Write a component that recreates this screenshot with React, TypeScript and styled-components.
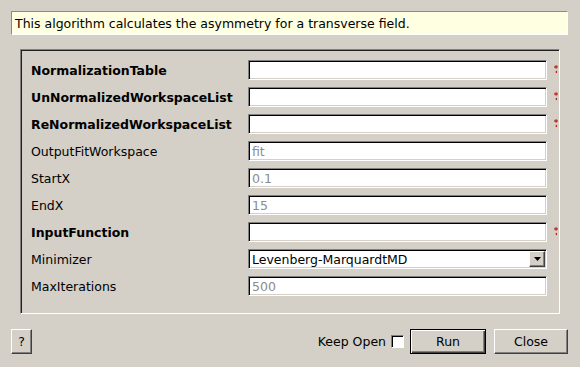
import { Fragment } from 'react';
import styled, { createGlobalStyle } from 'styled-components';

const GlobalStyle = createGlobalStyle`
  html, body {
    margin: 0;
    padding: 0;
    background: #d4d0c8;
  }
  body {
    font-family: "DejaVu Sans", "Liberation Sans", sans-serif;
    font-size: 12px;
    color: #000;
  }
`;

const Dialog = styled.div`
  width: 580px;
  height: 367px;
  box-sizing: border-box;
  padding: 11px 12px 0 11px;
  display: flex;
  flex-direction: column;
`;

const Description = styled.div`
  height: 24px;
  box-sizing: border-box;
  background: #ffffe1;
  border: 1px solid;
  border-color: #8a8a8a #ffffff #ffffff #8a8a8a;
  padding: 0 3px;
  display: flex;
  align-items: center;
  font-size: 12.5px;
`;

const Frame = styled.div`
  margin: 14px 8px 0 9px;
  height: 265px;
  box-sizing: border-box;
  border: 1px solid;
  border-color: #808080 #ffffff #ffffff #808080;
  box-shadow: inset 1px 1px 0 #202020;
  padding: 10px 0 0 10px;
  overflow: hidden;
`;

const Grid = styled.div`
  display: grid;
  grid-template-columns: 217px 299px 14px;
  grid-auto-rows: 20px;
  row-gap: 7px;
  align-items: center;
`;

const Label = styled.div<{ $bold?: boolean }>`
  font-weight: ${({ $bold }) => ($bold ? 'bold' : 'normal')};
  font-size: 12.5px;
  white-space: nowrap;
`;

const Field = styled.div`
  height: 20px;
  box-sizing: border-box;
  background: #fff;
  border: 1px solid;
  border-color: #808080 #ffffff #ffffff #808080;
  box-shadow: inset 1px 1px 0 #000, inset -1px -1px 0 #d4d0c8;
  padding: 0 3px;
  display: flex;
  align-items: center;
  color: #8c8c8c;
  font-size: 12.5px;
`;

const Combo = styled(Field)`
  color: #000;
  padding-right: 1px;
  justify-content: space-between;
`;

const ComboArrow = styled.div`
  width: 16px;
  height: 16px;
  box-sizing: border-box;
  background: #d4d0c8;
  border: 1px solid;
  border-color: #ffffff #404040 #404040 #ffffff;
  box-shadow: inset -1px -1px 0 #808080;
  display: flex;
  align-items: center;
  justify-content: center;
`;

const Star = styled.div`
  display: flex;
  align-items: center;
  padding-left: 7px;
  height: 20px;
`;

const Footer = styled.div`
  margin-top: 15px;
  display: flex;
  align-items: center;
`;

const Button = styled.button<{ $default?: boolean; $w: number }>`
  width: ${({ $w }) => $w}px;
  height: 25px;
  box-sizing: border-box;
  background: #d4d0c8;
  font-family: inherit;
  font-size: 12.5px;
  color: #000;
  padding: 0;
  border: 1px solid;
  border-color: ${({ $default }) =>
    $default ? '#000' : '#ffffff #404040 #404040 #ffffff'};
  box-shadow: ${({ $default }) =>
    $default
      ? 'inset 1px 1px 0 #fff, inset -1px -1px 0 #404040, inset -2px -2px 0 #808080'
      : 'inset -1px -1px 0 #808080'};
`;

const Spacer = styled.div`
  flex: 1;
`;

const KeepOpen = styled.label`
  display: flex;
  align-items: center;
  gap: 5px;
  margin-right: 6px;
  font-size: 12.5px;
`;

const Check = styled.span`
  width: 13px;
  height: 13px;
  box-sizing: border-box;
  background: #fff;
  border: 1px solid;
  border-color: #808080 #ffffff #ffffff #808080;
  box-shadow: inset 1px 1px 0 #000;
`;

const RightButtons = styled.div`
  display: flex;
  gap: 8px;
`;

type Prop = {
  name: string;
  bold?: boolean;
  value?: string;
  combo?: boolean;
};

const props: Prop[] = [
  { name: 'NormalizationTable', bold: true },
  { name: 'UnNormalizedWorkspaceList', bold: true },
  { name: 'ReNormalizedWorkspaceList', bold: true },
  { name: 'OutputFitWorkspace', value: 'fit' },
  { name: 'StartX', value: '0.1' },
  { name: 'EndX', value: '15' },
  { name: 'InputFunction', bold: true },
  { name: 'Minimizer', value: 'Levenberg-MarquardtMD', combo: true },
  { name: 'MaxIterations', value: '500' },
];

// red "required" marker, cut off by the frame edge like the original
const RequiredIcon = () => (
  <svg width="8" height="12" viewBox="0 0 8 12">
    <path d="M1 1 L4 2 L3 4 L0 3 Z" fill="#b5281f" />
    <circle cx="2.5" cy="2.5" r="1.8" fill="#c0392b" />
    <rect x="2" y="7" width="1.5" height="2.5" fill="#b5281f" />
  </svg>
);

export default function App() {
  return (
    <>
      <GlobalStyle />
      <Dialog>
        <Description>This algorithm calculates the asymmetry for a transverse field.</Description>
        <Frame>
          <Grid>
            {props.map((p) => (
              <Fragment key={p.name}>
                <Label $bold={p.bold}>{p.name}</Label>
                {p.combo ? (
                  <Combo>
                    {p.value}
                    <ComboArrow>
                      <svg width="7" height="4" viewBox="0 0 7 4">
                        <path d="M0 0 H7 L3.5 4 Z" fill="#000" />
                      </svg>
                    </ComboArrow>
                  </Combo>
                ) : (
                  <Field>{p.value}</Field>
                )}
                <Star>{p.bold && <RequiredIcon />}</Star>
              </Fragment>
            ))}
          </Grid>
        </Frame>
        <Footer>
          <Button $w={21}>?</Button>
          <Spacer />
          <KeepOpen>
            Keep Open
            <Check />
          </KeepOpen>
          <RightButtons>
            <Button $w={76} $default>
              Run
            </Button>
            <Button $w={74}>Close</Button>
          </RightButtons>
        </Footer>
      </Dialog>
    </>
  );
}
